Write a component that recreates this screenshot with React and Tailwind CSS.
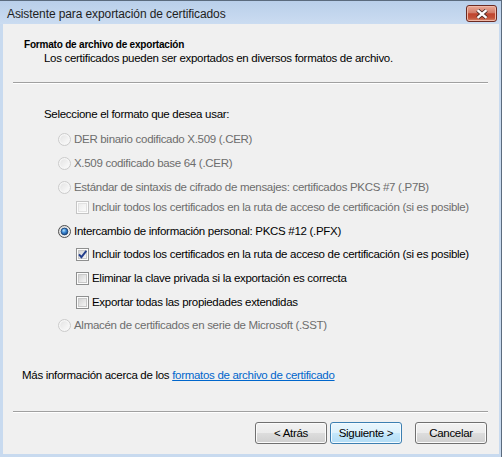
import React from 'react';

const font = { fontFamily: '"Liberation Sans", Arial, sans-serif' };

function Radio({ checked, disabled }) {
  if (disabled) {
    return (
      <svg width="13" height="13" viewBox="0 0 13 13" className="shrink-0">
        <defs>
          <linearGradient id="radioOff" x1="0" y1="0" x2="1" y2="1">
            <stop offset="0" stopColor="#e4e4e4" />
            <stop offset="1" stopColor="#fafafa" />
          </linearGradient>
        </defs>
        <circle cx="6.5" cy="6.5" r="6" fill="#f6f6f6" stroke="#cacaca" />
        <circle cx="6.5" cy="6.5" r="4.3" fill="url(#radioOff)" />
      </svg>
    );
  }
  return (
    <svg width="13" height="13" viewBox="0 0 13 13" className="shrink-0">
      <defs>
        <linearGradient id="radioRing" x1="0" y1="0" x2="1" y2="1">
          <stop offset="0" stopColor="#d6d6d6" />
          <stop offset="1" stopColor="#f8f8f8" />
        </linearGradient>
        <radialGradient id="radioDot" cx="0.4" cy="0.35" r="0.7">
          <stop offset="0" stopColor="#b4e2fb" />
          <stop offset="0.45" stopColor="#3d8ad6" />
          <stop offset="1" stopColor="#16447f" />
        </radialGradient>
      </defs>
      <circle cx="6.5" cy="6.5" r="6" fill="url(#radioRing)" stroke="#4f4f4f" />
      {checked && <circle cx="6.5" cy="6.5" r="3.4" fill="url(#radioDot)" stroke="#173d6e" strokeWidth="0.8" />}
    </svg>
  );
}

function Check({ checked, disabled }) {
  return (
    <svg width="13" height="13" viewBox="0 0 13 13" className="shrink-0">
      <defs>
        <linearGradient id="chkOn" x1="0" y1="0" x2="1" y2="1">
          <stop offset="0" stopColor="#d2d2d2" />
          <stop offset="1" stopColor="#f7f7f7" />
        </linearGradient>
        <linearGradient id="chkOff" x1="0" y1="0" x2="1" y2="1">
          <stop offset="0" stopColor="#ececec" />
          <stop offset="1" stopColor="#fbfbfb" />
        </linearGradient>
      </defs>
      <rect x="0.5" y="0.5" width="12" height="12" fill="#fcfcfc" stroke={disabled ? '#c5c5c5' : '#8e8f8f'} />
      <rect x="2.5" y="2.5" width="8" height="8" fill={disabled ? 'url(#chkOff)' : 'url(#chkOn)'} stroke={disabled ? '#e2e2e2' : '#c9c9c9'} />
      {checked && (
        <path d="M3 6.3 L5.4 9.2 L10.3 2.8" fill="none" stroke="#233e8c" strokeWidth="1.9" />
      )}
    </svg>
  );
}

function Row({ indent, children, mt }) {
  return (
    <div className={`flex items-center h-[15px] ${mt} ${indent}`}>
      {children}
    </div>
  );
}

function Btn({ children, focused }) {
  return (
    <button
      className={
        focused
          ? 'w-[72px] h-[22px] rounded-[3px] border border-[#3c7fb1] bg-[linear-gradient(#eaf6fd,#dcf1fc_50%,#c6e8fb_50%,#b2dcf5)] shadow-[inset_0_0_0_1px_#f4fbff] text-black text-[11.5px] tracking-[-0.3px]'
          : 'w-[72px] h-[22px] rounded-[3px] border border-[#707070] bg-[linear-gradient(#f2f2f2,#ebebeb_50%,#dddddd_50%,#cfcfcf)] shadow-[inset_0_0_0_1px_#fbfbfb] text-black text-[11.5px] tracking-[-0.3px]'
      }
      style={font}
    >
      {children}
    </button>
  );
}

export default function App() {
  return (
    <div
      className="w-[502px] h-[457px] flex flex-col overflow-hidden bg-[#c8daef] border-t border-r border-[#5b6b7e] text-[11.5px] tracking-[-0.3px] text-black"
      style={font}
    >
      {/* title bar */}
      <div className="h-[23px] flex items-start justify-between bg-linear-to-b from-[#b9cfea] to-[#cbdcf1]">
        <span className="pl-[7px] pt-[6px] leading-[15px] text-[12px] tracking-[-0.1px] text-[#1e1e1e]">
          Asistente para exportación de certificados
        </span>
        <div className="mt-[4px] mr-[4px] w-[31px] h-[17px] rounded-[3px] border border-[#6b2a22] bg-[linear-gradient(#eaa896,#d27d6a_45%,#c0442e_52%,#c3533a_80%,#d98c6f)] shadow-[inset_0_0_0_1px_#f0b9a8] flex items-center justify-center">
          <svg width="14" height="10" viewBox="0 0 14 10">
            <path d="M2.5 1.2 L11.5 8.8 M11.5 1.2 L2.5 8.8" stroke="#4a2a25" strokeWidth="4" />
            <path d="M2.5 1.2 L11.5 8.8 M11.5 1.2 L2.5 8.8" stroke="#ffffff" strokeWidth="2.4" />
          </svg>
        </div>
      </div>

      {/* client area */}
      <div className="flex-1 flex flex-col ml-[3px] mr-[2px] mb-[3px] bg-[#f0f0f0] leading-[15px]">
        <div className="pt-[13px] pl-[21px] h-[27px] font-bold text-[10px] tracking-[-0.2px]">Formato de archivo de exportación</div>
        <div className="pl-[41px]">Los certificados pueden ser exportados en diversos formatos de archivo.</div>
        <div className="mt-[16px] ml-[10px] mr-[11px] border-t border-[#a0a0a0] border-b border-b-white" />

        <div className="mt-[23px] pl-[41px]">Seleccione el formato que desea usar:</div>

        <div className="flex flex-col">
          <Row mt="mt-[10px]" indent="pl-[55px]">
            <Radio disabled />
            <span className="ml-[3px] text-[#6d6d6d]">DER binario codificado X.509 (.CER)</span>
          </Row>
          <Row mt="mt-[9px]" indent="pl-[55px]">
            <Radio disabled />
            <span className="ml-[3px] text-[#6d6d6d]">X.509 codificado base 64 (.CER)</span>
          </Row>
          <Row mt="mt-[9px]" indent="pl-[55px]">
            <Radio disabled />
            <span className="ml-[3px] text-[#6d6d6d]">Estándar de sintaxis de cifrado de mensajes: certificados PKCS #7 (.P7B)</span>
          </Row>
          <Row mt="mt-[5px]" indent="pl-[73px]">
            <Check disabled />
            <span className="ml-[3px] text-[#6d6d6d]">Incluir todos los certificados en la ruta de acceso de certificación (si es posible)</span>
          </Row>
          <Row mt="mt-[9px]" indent="pl-[55px]">
            <Radio checked />
            <span className="ml-[3px]">Intercambio de información personal: PKCS #12 (.PFX)</span>
          </Row>
          <Row mt="mt-[8px]" indent="pl-[73px]">
            <Check checked />
            <span className="ml-[3px]">Incluir todos los certificados en la ruta de acceso de certificación (si es posible)</span>
          </Row>
          <Row mt="mt-[9px]" indent="pl-[73px]">
            <Check />
            <span className="ml-[3px]">Eliminar la clave privada si la exportación es correcta</span>
          </Row>
          <Row mt="mt-[9px]" indent="pl-[73px]">
            <Check />
            <span className="ml-[3px]">Exportar todas las propiedades extendidas</span>
          </Row>
          <Row mt="mt-[8px]" indent="pl-[55px]">
            <Radio disabled />
            <span className="ml-[3px] text-[#6d6d6d]">Almacén de certificados en serie de Microsoft (.SST)</span>
          </Row>
        </div>

        <div className="mt-[35px] pl-[19px]">
          Más información acerca de los{' '}
          <span className="text-[#0066cc] underline">formatos de archivo de certificado</span>
        </div>

        <div className="mt-[28px] ml-[10px] mr-[11px] border-t border-[#a0a0a0] border-b border-b-white" />

        <div className="mt-[9px] flex justify-end mr-[12px]">
          <Btn>&lt; Atrás</Btn>
          <div className="ml-[3px]">
            <Btn focused>Siguiente &gt;</Btn>
          </div>
          <div className="ml-[13px]">
            <Btn>Cancelar</Btn>
          </div>
        </div>
      </div>
    </div>
  );
}
